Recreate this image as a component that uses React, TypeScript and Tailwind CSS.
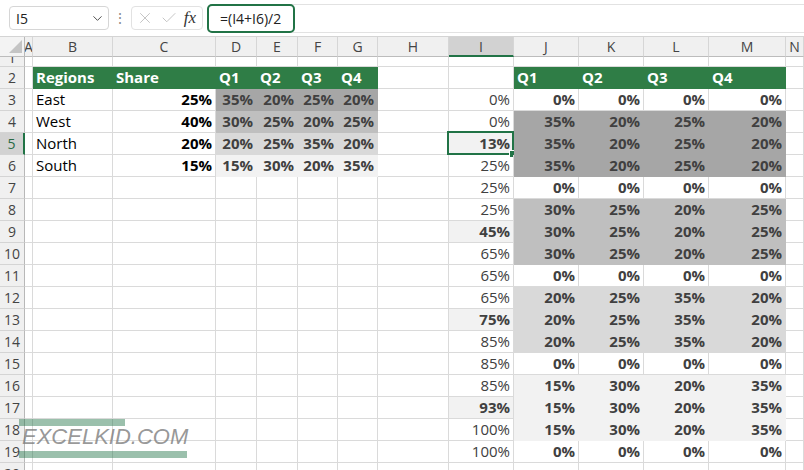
import clsx from 'clsx'
import { ChevronDown, X, Check } from 'lucide-react'

type Spec = { t?: string; r?: boolean; c?: string; sel?: boolean }

const GRID =
  'grid grid-cols-[25px_8px_80px_103px_41px_41px_40px_40px_71px_65px_65px_65px_65px_77px_18px]'

const TXT = 'font-bold text-[#404040]'
const DK = 'bg-[#a6a6a6] border-[#a6a6a6] font-bold text-[#404040]'
const MD = 'bg-[#bfbfbf] border-[#bfbfbf] font-bold text-[#404040]'
const LT = 'bg-[#d9d9d9] border-[#d9d9d9] font-bold text-[#404040]'
const XL = 'bg-[#f2f2f2] border-[#f2f2f2] font-bold text-[#404040]'
const GR = 'bg-[#2f7d46] border-[#2f7d46] font-bold text-white'

const LETTERS = ['A', 'B', 'C', 'D', 'E', 'F', 'G', 'H', 'I', 'J', 'K', 'L', 'M', 'N']

// left table: region, share, quarter values, fill
const LEFT: [string, string, string[], string][] = [
  ['East', '25%', ['35%', '20%', '25%', '20%'], DK],
  ['West', '40%', ['30%', '25%', '20%', '25%'], MD],
  ['North', '20%', ['20%', '25%', '35%', '20%'], LT],
  ['South', '15%', ['15%', '30%', '20%', '35%'], XL],
]

const BLOCKS: [string[], string][] = [
  [['35%', '20%', '25%', '20%'], DK],
  [['30%', '25%', '20%', '25%'], MD],
  [['20%', '25%', '35%', '20%'], LT],
  [['15%', '30%', '20%', '35%'], XL],
]

const SHARES = ['0%', '0%', '13%', '25%', '25%', '25%', '45%', '65%', '65%', '65%', '75%', '85%', '85%', '85%', '93%', '100%', '100%']

function buildRows(): Spec[][] {
  const rows: Spec[][] = []
  // row 2
  rows.push([
    {},
    { t: 'Regions', c: GR },
    { t: 'Share', c: GR },
    { t: 'Q1', c: GR },
    { t: 'Q2', c: GR },
    { t: 'Q3', c: GR },
    { t: 'Q4', c: GR },
    {},
    {},
    { t: 'Q1', c: GR },
    { t: 'Q2', c: GR },
    { t: 'Q3', c: GR },
    { t: 'Q4', c: GR },
    {},
  ])
  for (let i = 0; i < 17; i++) {
    const row: Spec[] = [{}]
    const left = LEFT[i]
    if (left) {
      row.push({ t: left[0], c: 'border-[#dadada] text-black' })
      row.push({ t: left[1], r: true, c: 'border-[#dadada] font-bold text-black' })
      left[2].forEach((v) => row.push({ t: v, r: true, c: left[3] }))
    } else {
      for (let k = 0; k < 6; k++) row.push({})
    }
    row.push({})
    const group = i % 4
    const block = Math.floor(i / 4)
    const boldShare = group === 2 && block > 0
    row.push({
      t: SHARES[i],
      r: true,
      sel: i === 2,
      c: i === 2 || boldShare ? 'bg-[#f2f2f2] border-[#dadada] font-bold text-[#404040]' : 'border-[#dadada] text-[#404040]',
    })
    if (group === 0 || block > 3) {
      for (let k = 0; k < 4; k++) row.push({ t: '0%', r: true, c: clsx('border-[#dadada]', TXT) })
    } else {
      const [vals, fill] = BLOCKS[block]
      vals.forEach((v) => row.push({ t: v, r: true, c: fill }))
    }
    row.push({})
    rows.push(row)
  }
  rows.push(Array.from({ length: 14 }, () => ({})))
  return rows
}

function Cell({ s }: { s: Spec }) {
  return (
    <div
      className={clsx(
        'relative flex items-center whitespace-nowrap border-r border-b pl-[3px] pr-[3px] text-[15px] leading-none',
        s.r ? 'justify-end' : 'justify-start',
        s.c ?? 'border-[#dadada]'
      )}
    >
      {s.t}
      {s.sel && (
        <>
          <div className="absolute -top-[2px] -left-[2px] -right-[1px] -bottom-[1px] border-2 border-[#217346]" />
          <div className="absolute -right-[3px] -bottom-[3px] h-[6px] w-[6px] bg-[#217346] outline outline-1 outline-white" />
        </>
      )}
    </div>
  )
}

function RowHead({ n, selected }: { n: number; selected?: boolean }) {
  return (
    <div
      className={clsx(
        'flex items-center justify-center border-b border-b-[#d4d4d4] text-[14px]',
        selected
          ? 'bg-[#d2d2d2] border-r-2 border-r-[#217346] text-[#2a6b46]'
          : 'bg-[#f0f0f0] border-r border-r-[#b8b8b8] text-[#444]'
      )}
    >
      {n}
    </div>
  )
}

function FormulaBar() {
  return (
    <div className="flex h-[36px] items-center bg-white pl-[9px]">
      <div className="flex h-[24px] w-[100px] items-center justify-between rounded-[4px] border border-[#d6d6d6] pl-[6px] pr-[3px] text-[14px] text-[#222]">
        <span>I5</span>
        <ChevronDown size={15} strokeWidth={1.5} className="text-[#444]" />
      </div>
      <div className="flex w-[22px] justify-center text-[14px] leading-none text-[#8a8a8a]">⋮</div>
      <div className="flex h-[24px] w-[72px] items-center justify-between rounded-[4px] border border-[#e2e2e2] px-[4px]">
        <X size={18} strokeWidth={1.1} className="text-[#b8b8b8]" />
        <Check size={18} strokeWidth={1.1} className="text-[#b8b8b8]" />
        <span className="pr-[2px] font-['Liberation_Serif',serif] text-[17px] italic text-[#333]">fx</span>
      </div>
      <div className="ml-[4px] flex h-[29px] flex-1 rounded-l-[5px] border border-r-0 border-[#e2e2e2]">
        <div className="-m-px flex h-[29px] w-[88px] items-center rounded-[5px] border-2 border-[#217346] pl-[11px] text-[14px] text-[#222]">
          =(I4+I6)/2
        </div>
      </div>
    </div>
  )
}

export default function App() {
  const rows = buildRows()
  return (
    <div className="relative h-[470px] w-[804px] overflow-hidden bg-white font-['Open_Sans','Noto_Sans',sans-serif]">
      <FormulaBar />

      {/* column headers */}
      <div className={clsx(GRID, 'h-[21px] border-t border-[#d4d4d4]')}>
        <div className="relative border-r border-b border-r-[#b8b8b8] border-b-[#bcbcbc] bg-[#f3f3f3]">
          <svg className="absolute bottom-[3px] right-[2px]" width="13" height="13" viewBox="0 0 13 13">
            <polygon points="13,0 13,13 0,13" fill="#c4c4c4" />
          </svg>
        </div>
        {LETTERS.map((l) => (
          <div
            key={l}
            className={clsx(
              'flex items-center justify-center overflow-hidden border-r border-r-[#d6d6d6] text-[14px] text-[#444]',
              l === 'I' ? 'bg-[#d2d2d2] border-b-2 border-b-[#217346]' : 'bg-[#f0f0f0] border-b border-b-[#bcbcbc]'
            )}
          >
            {l}
          </div>
        ))}
      </div>

      {/* row 1, scrolled so only its lower part shows */}
      <div className={clsx(GRID, 'h-[10px]')}>
        <div className="flex justify-center overflow-hidden border-r border-b border-r-[#b8b8b8] border-b-[#d4d4d4] bg-[#f0f0f0] text-[14px] text-[#444]">
          <span className="-mt-[6px] block leading-[14px]">1</span>
        </div>
        {LETTERS.map((l) => (
          <div key={l} className="border-r border-b border-[#dadada]" />
        ))}
      </div>

      {rows.map((row, i) => (
        <div key={i} className={clsx(GRID, 'h-[22px]')}>
          <RowHead n={i + 2} selected={i + 2 === 5} />
          {row.map((s, k) => (
            <Cell key={k} s={s} />
          ))}
        </div>
      ))}

      {/* watermark */}
      <div className="absolute left-[19px] top-[419px] h-[7px] w-[106px] bg-[#217346]/45" />
      <div className="absolute left-[22px] top-[426px] font-['Liberation_Sans',sans-serif] text-[22px] italic leading-[22px] text-[#7d7d7d]/80">
        EXCELKID.COM
      </div>
      <div className="absolute left-[19px] top-[451px] h-[7px] w-[168px] bg-[#217346]/45" />
    </div>
  )
}
